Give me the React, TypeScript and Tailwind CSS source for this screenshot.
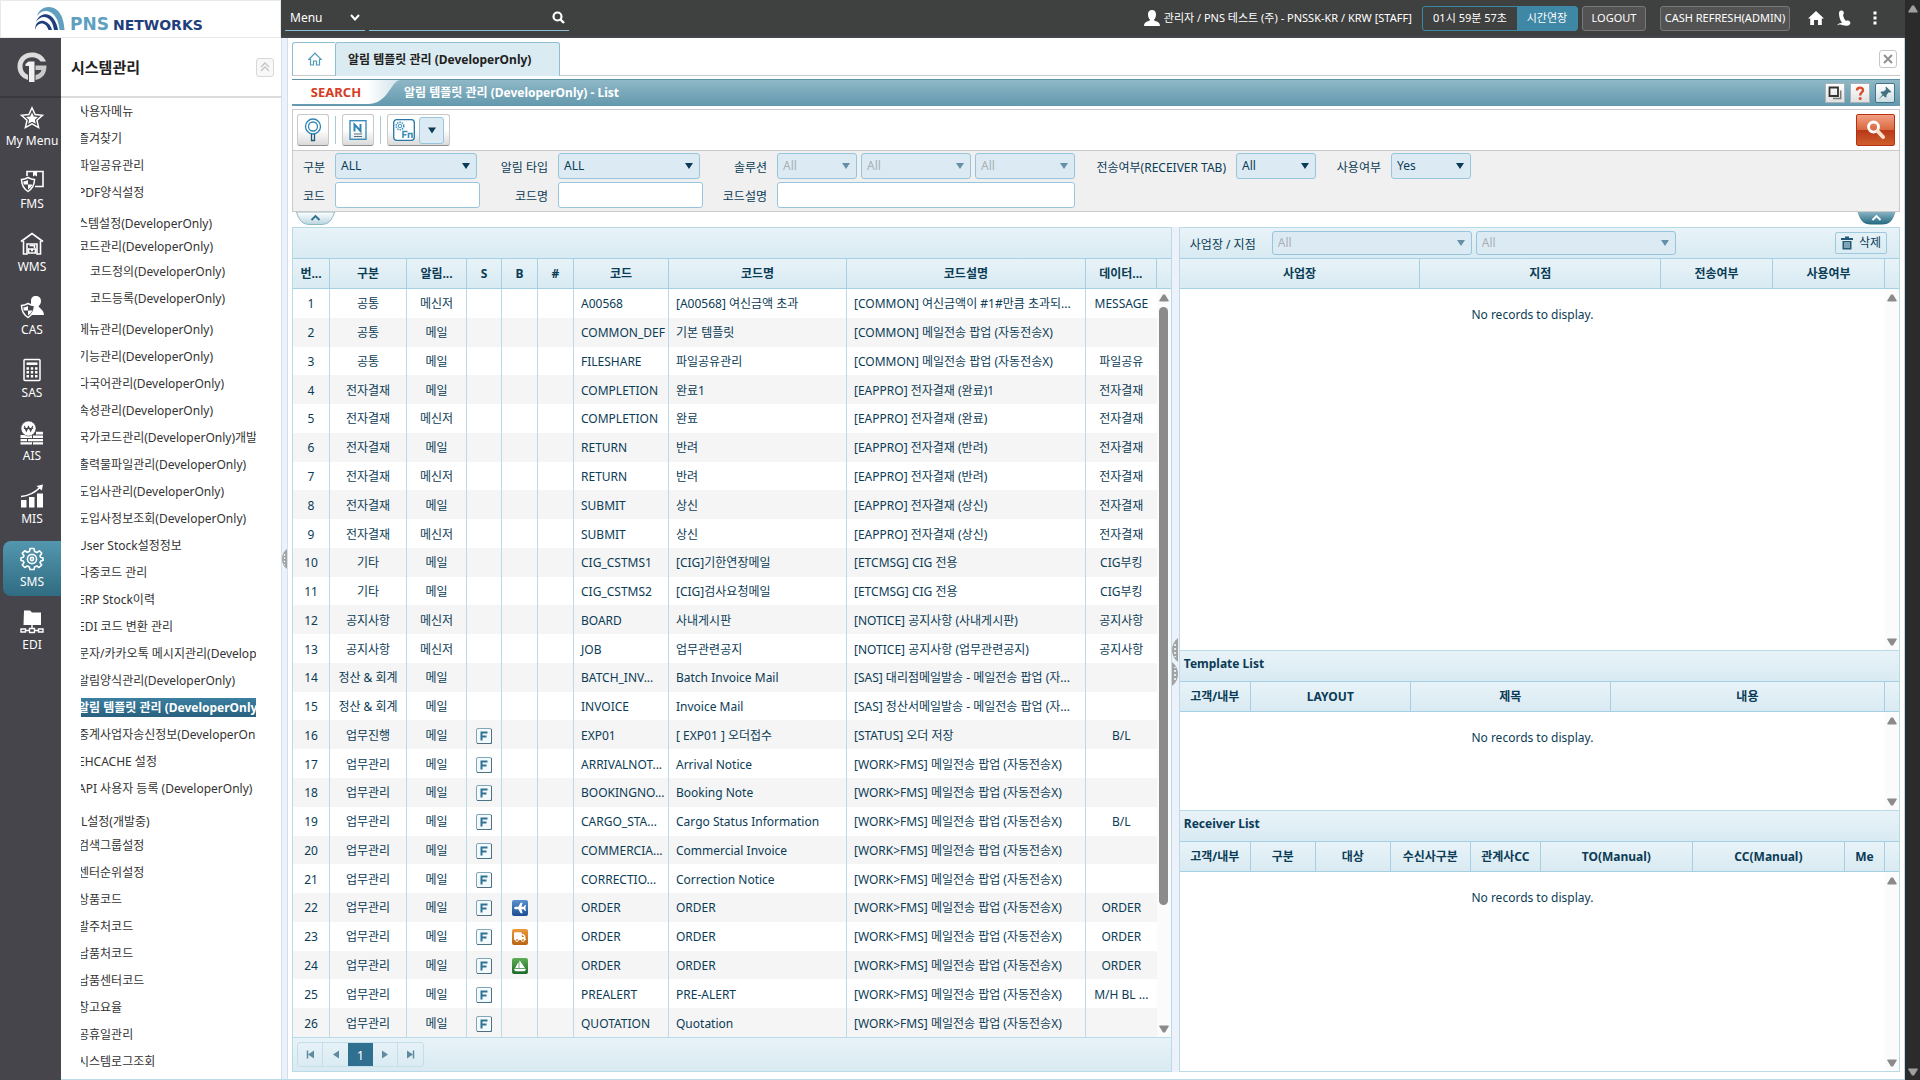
import type { ReactNode } from 'react';
import { FaPlane, FaSailboat, FaTruck } from 'react-icons/fa6';

type Leaf = { label: string; kind?: 'group' | 'top' | 'child' | 'active' | 'bare' };

const tree: Leaf[] = [
  { label: '사용자메뉴' },
  { label: '즐겨찾기' },
  { label: '파일공유관리' },
  { label: 'PDF양식설정' },
  { label: '시스템설정(DeveloperOnly)', kind: 'top' },
  { label: '코드관리(DeveloperOnly)', kind: 'group' },
  { label: '코드정의(DeveloperOnly)', kind: 'child' },
  { label: '코드등록(DeveloperOnly)', kind: 'child' },
  { label: '메뉴관리(DeveloperOnly)' },
  { label: '기능관리(DeveloperOnly)' },
  { label: '다국어관리(DeveloperOnly)' },
  { label: '속성관리(DeveloperOnly)' },
  { label: '국가코드관리(DeveloperOnly)개발' },
  { label: '출력물파일관리(DeveloperOnly)' },
  { label: '도입사관리(DeveloperOnly)' },
  { label: '도입사정보조회(DeveloperOnly)' },
  { label: 'User Stock설정정보' },
  { label: '다중코드 관리' },
  { label: 'ERP Stock이력' },
  { label: 'EDI 코드 변환 관리' },
  { label: '문자/카카오톡 메시지관리(Develop' },
  { label: '알림양식관리(DeveloperOnly)' },
  { label: '알림 템플릿 관리 (DeveloperOnly)', kind: 'active' },
  { label: '중계사업자송신정보(DeveloperOn' },
  { label: 'EHCACHE 설정' },
  { label: 'API 사용자 등록 (DeveloperOnly)' },
  { label: 'L설정(개발중)', kind: 'bare' },
  { label: '검색그룹설정' },
  { label: '센터순위설정' },
  { label: '상품코드' },
  { label: '발주처코드' },
  { label: '납품처코드' },
  { label: '납품센터코드' },
  { label: '창고요율' },
  { label: '공휴일관리' },
  { label: '시스템로그조회' },
];

const MS = '[WORK>FMS] 메일전송 팝업 (자동전송X)';
type Row = [string, string, string, string, string, string, string?, string?];
const rows: Row[] = [
  ['공통', '메신저', 'A00568', '[A00568] 여신금액 초과', '[COMMON] 여신금액이 #1#만큼 초과되...', 'MESSAGE'],
  ['공통', '메일', 'COMMON_DEF', '기본 템플릿', '[COMMON] 메일전송 팝업 (자동전송X)', ''],
  ['공통', '메일', 'FILESHARE', '파일공유관리', '[COMMON] 메일전송 팝업 (자동전송X)', '파일공유'],
  ['전자결재', '메일', 'COMPLETION', '완료1', '[EAPPRO] 전자결재 (완료)1', '전자결재'],
  ['전자결재', '메신저', 'COMPLETION', '완료', '[EAPPRO] 전자결재 (완료)', '전자결재'],
  ['전자결재', '메일', 'RETURN', '반려', '[EAPPRO] 전자결재 (반려)', '전자결재'],
  ['전자결재', '메신저', 'RETURN', '반려', '[EAPPRO] 전자결재 (반려)', '전자결재'],
  ['전자결재', '메일', 'SUBMIT', '상신', '[EAPPRO] 전자결재 (상신)', '전자결재'],
  ['전자결재', '메신저', 'SUBMIT', '상신', '[EAPPRO] 전자결재 (상신)', '전자결재'],
  ['기타', '메일', 'CIG_CSTMS1', '[CIG]기한연장메일', '[ETCMSG] CIG 전용', 'CIG부킹'],
  ['기타', '메일', 'CIG_CSTMS2', '[CIG]검사요청메일', '[ETCMSG] CIG 전용', 'CIG부킹'],
  ['공지사항', '메신저', 'BOARD', '사내게시판', '[NOTICE] 공지사항 (사내게시판)', '공지사항'],
  ['공지사항', '메신저', 'JOB', '업무관련공지', '[NOTICE] 공지사항 (업무관련공지)', '공지사항'],
  ['정산 & 회계', '메일', 'BATCH_INV...', 'Batch Invoice Mail', '[SAS] 대리점메일발송 - 메일전송 팝업 (자...', ''],
  ['정산 & 회계', '메일', 'INVOICE', 'Invoice Mail', '[SAS] 정산서메일발송 - 메일전송 팝업 (자...', ''],
  ['업무진행', '메일', 'EXP01', '[ EXP01 ] 오더접수', '[STATUS] 오더 저장', 'B/L', 'F'],
  ['업무관리', '메일', 'ARRIVALNOT...', 'Arrival Notice', MS, '', 'F'],
  ['업무관리', '메일', 'BOOKINGNO...', 'Booking Note', MS, '', 'F'],
  ['업무관리', '메일', 'CARGO_STA...', 'Cargo Status Information', MS, 'B/L', 'F'],
  ['업무관리', '메일', 'COMMERCIA...', 'Commercial Invoice', MS, '', 'F'],
  ['업무관리', '메일', 'CORRECTIO...', 'Correction Notice', MS, '', 'F'],
  ['업무관리', '메일', 'ORDER', 'ORDER', MS, 'ORDER', 'F', 'air'],
  ['업무관리', '메일', 'ORDER', 'ORDER', MS, 'ORDER', 'F', 'truck'],
  ['업무관리', '메일', 'ORDER', 'ORDER', MS, 'ORDER', 'F', 'sea'],
  ['업무관리', '메일', 'PREALERT', 'PRE-ALERT', MS, 'M/H BL ...', 'F'],
  ['업무관리', '메일', 'QUOTATION', 'Quotation', MS, '', 'F'],
];

const HEAD = 'bg-linear-to-b from-[#e8f3f8] to-[#d9eaf2]';

/* ---------- rail icons ---------- */
const shield = (
  <>
    <path d="M8 8.500 C10.500 10 13 10.500 14.500 10.500 C14.500 16 12.500 19.500 8 22.500 C3.500 19.500 1.500 16 1.500 10.500 C3 10.500 5.500 10 8 8.500 Z" fill="#46454b" stroke="#fff" strokeWidth="1.500" />
    <path d="M8 11 V15.500 H3.800 C3.500 14.500 3.400 13.500 3.400 12.300 C5 12.200 6.700 11.800 8 11 Z M8 15.500 H12.300 C11.600 17.500 10.200 19 8 20.500 Z" fill="#fff" />
  </>
);
const railIcons: Record<string, ReactNode> = {
  'My Menu': (
    <g fill="none" stroke="#fff">
      <path d="M12 1.800 L15.100 8.500 L22.500 9.300 L17 14.300 L18.600 21.600 L12 17.900 L5.400 21.600 L7 14.300 L1.500 9.300 L8.900 8.500 Z" strokeWidth="1.500" />
      <path d="M12 6.500 L13.800 10.500 L18 11 L14.900 13.700 L15.800 17.800 L12 15.700 L8.200 17.800 L9.100 13.700 L6 11 L10.200 10.500 Z" fill="#fff" stroke="none" />
    </g>
  ),
  FMS: (
    <>
      <path d="M7 7 V2.500 H23 V17.500 H15" fill="none" stroke="#fff" strokeWidth="1.600" />
      <path d="M13 2.500 V7.500 L15 6.300 L17 7.500 V2.500 Z" fill="#fff" />
      {shield}
    </>
  ),
  WMS: (
    <g fill="none" stroke="#fff" strokeWidth="1.600">
      <path d="M1 9.500 L12 1.500 L23 9.500 M3.500 9 V22 H7 V12 H17 V22 H20.500 V9" />
      <path d="M9.500 13.500 H14.500 V16 M8.500 17 H15.500 V21 H8.500 Z M11 18.500 H13" />
    </g>
  ),
  CAS: (
    <>
      <path d="M16 1 C19.500 1 21 3.500 21 6 C21 8.500 19.800 10.300 18.500 11 C19.500 14 23.500 14 24 20 H11 V6 C11 3 12.500 1 16 1 Z" fill="#fff" />
      {shield}
    </>
  ),
  SAS: (
    <g fill="none" stroke="#fff" strokeWidth="1.500">
      <rect x="4" y="1.500" width="16" height="21" rx="1" />
      <path d="M6.500 5.700 H17.500" strokeWidth="2.500" />
      <path d="M6.500 10.500 H9 M10.800 10.500 H13.200 M15 10.500 H17.500 M6.500 14.300 H9 M10.800 14.300 H13.200 M15 14.300 H17.500 M6.500 18.200 H9 M10.800 18.200 H13.200 M15 18.200 H17.500" strokeWidth="2.600" />
    </g>
  ),
  AIS: (
    <>
      <path d="M0.500 14 H12 V17 H0.500 Z M0.500 18 H7 V20.300 H0.500 Z M8 18 H23 V20.300 H8 Z M0.500 21.200 H12 V23.500 H0.500 Z M13 21.200 H23 V23.500 H13 Z M13 14.500 H23 V17 H13 Z M16 10.800 H23 V13.400 H16 Z" fill="#fff" />
      <circle cx="8.500" cy="7.500" r="7.500" fill="#fff" stroke="#46454b" strokeWidth="0.600" />
      <path d="M4.300 5 L6.300 10 L8.500 5.500 L10.700 10 L12.700 5 M3.800 7.500 H13.200" fill="none" stroke="#46454b" strokeWidth="1.200" />
    </>
  ),
  MIS: (
    <>
      <path d="M1 16 H6.500 V23.500 H1 Z M9 13 H14.500 V23.500 H9 Z M17 9.500 H23 V23.500 H17 Z" fill="#fff" />
      <path d="M1 12.500 C9 12 15 8.500 20.500 3" fill="none" stroke="#fff" strokeWidth="1.600" />
      <path d="M16.500 2 L23 0.500 L21.800 6.500 Z" fill="#fff" />
    </>
  ),
  SMS: (
    <g fill="none" stroke="#fff" strokeWidth="1.600">
      <path d="M10 1.500 H14 L14.600 4.500 L17 5.500 L19.400 3.800 L21.700 6.300 L20 9 L20.700 10.500 L23 11 V13.500 L20.700 14 L20 15.500 L21.700 18 L19 20.500 L16.800 19 L14.600 20 L14 22.500 H10 L9.400 20 L7.200 19 L4.800 20.500 L2.300 18 L4 15.500 L3.300 14 L1 13.500 V10.700 L3.300 10.300 L4 8.700 L2.300 6.200 L4.800 3.800 L7.200 5.300 L9.400 4.500 Z" strokeLinejoin="round" />
      <circle cx="12" cy="12" r="4.600" />
      <circle cx="12" cy="12" r="1.600" />
    </g>
  ),
  EDI: (
    <>
      <path d="M4 0.500 H10 L12 2.500 H21 V15 H3.500 Z" fill="#fff" />
      <path d="M12 15 V20 M4 20.500 H20" stroke="#fff" strokeWidth="1.400" />
      <path d="M1 19 H5.500 V22 H1 Z M9.500 18.500 H14.500 V22.500 H9.500 Z M18.500 19 H23 V22 H18.500 Z" fill="#46454b" stroke="#fff" strokeWidth="1.400" />
    </>
  ),
};

/* ---------- small pieces ---------- */
function Caret({ className }: { className: string }) {
  return (
    <svg viewBox="0 0 9 7" className={className} aria-hidden="true">
      <path d="M0 0 H9 L4.500 7 Z" fill="currentColor" />
    </svg>
  );
}

function Pick({ id, label, value, size, h = 'h-[26px]', disabled }: { id: string; label: string; value: string; size: string; h?: string; disabled?: boolean }) {
  return (
    <div className={`relative ${size}`}>
      <select
        id={id}
        aria-label={label}
        disabled={disabled}
        className={`w-full ${h} appearance-none rounded-[3px] border border-[#97c6dc] bg-[#dcebf3] pl-[5px] text-xs leading-none ${disabled ? 'text-[#a9afb3]' : 'text-[#0b3c56]'}`}
      >
        <option>{value}</option>
      </select>
      <Caret className={`pointer-events-none absolute right-[7px] top-1/2 h-[7px] w-[8px] -translate-y-1/2 ${disabled ? 'text-[#6590a5]' : 'text-[#0b3c56]'}`} />
    </div>
  );
}

function ScrollColumn({ thumb }: { thumb?: boolean }) {
  return (
    <div className="flex w-[14px] shrink-0 flex-col">
      <div className={`h-[31px] border-y border-[#a5cfe2] ${HEAD}`} />
      <div className="flex flex-1 flex-col items-center bg-[#fbfbfb] py-1">
        <svg viewBox="0 0 10 8" className="mt-px h-[8px] w-[10px]"><path d="M4 0.500 H6 L9.700 6.500 Q10 7.500 9 7.500 H1 Q0 7.500 0.300 6.500 Z" fill="#8b8b8b" /></svg>
        <div className="mt-[5px] flex w-full flex-1 justify-center">
          {thumb && <div className="h-5/6 w-[9px] rounded-full bg-[#8b8b8b]" />}
        </div>
        <svg viewBox="0 0 10 8" className="h-[8px] w-[10px] rotate-180"><path d="M4 0.500 H6 L9.700 6.500 Q10 7.500 9 7.500 H1 Q0 7.500 0.300 6.500 Z" fill="#8b8b8b" /></svg>
      </div>
    </div>
  );
}

function Th({ children, w }: { children: ReactNode; w: string }) {
  return (
    <th scope="col" className={`${w} h-[31px] truncate border-y border-r border-[#a5cfe2] px-1 text-center font-bold ${HEAD}`}>
      {children}
    </th>
  );
}

function EmptyGrid({ cols, label }: { cols: [string, string][]; label: string }) {
  return (
    <div className="flex min-h-0 flex-1">
      <div className="min-w-0 flex-1">
        <table aria-label={label} className="h-full w-full table-fixed border-separate border-spacing-0">
          <thead>
            <tr className="h-[31px]">
              {cols.map(([name, w]) => <Th key={name} w={w}>{name}</Th>)}
            </tr>
          </thead>
          <tbody>
            <tr>
              <td colSpan={cols.length} className="pt-[18px] text-center align-top">No records to display.</td>
            </tr>
          </tbody>
        </table>
      </div>
      <ScrollColumn />
    </div>
  );
}

function FlagF() {
  return (
    <svg viewBox="0 0 16 16" className="mx-auto block size-4" role="img" aria-label="F">
      <rect x="0.500" y="0.500" width="15" height="15" rx="1.500" fill="#f4fafc" stroke="#7fa5b8" />
      <path d="M1 15.500 H15.500 V1" fill="none" stroke="#4d7286" />
      <path d="M5.500 12.500 V4.500 H11.500 M5.500 8.500 H10.500" fill="none" stroke="#2f7292" strokeWidth="2" />
    </svg>
  );
}

function Mode({ kind }: { kind: string }) {
  if (kind === 'air')
    return <span className="mx-auto flex size-4 items-center justify-center rounded-[2px] bg-linear-to-b from-[#5c93d0] to-[#1d4c94] text-white"><FaPlane className="size-3 rotate-180" /></span>;
  if (kind === 'truck')
    return <span className="mx-auto flex size-4 items-center justify-center rounded-[2px] bg-linear-to-b from-[#f09a3c] to-[#b86413] text-white"><FaTruck className="size-3" /></span>;
  return <span className="mx-auto flex size-4 items-center justify-center rounded-[2px] bg-linear-to-b from-[#5fae55] to-[#1c6b2a] text-white"><FaSailboat className="size-3" /></span>;
}

function ToolButton({ label, children }: { label: string; children: ReactNode }) {
  return (
    <button type="button" aria-label={label} className="flex h-[32px] w-[32px] items-center justify-center rounded-[3px] border border-[#c9c9c9] border-b-[#8f8f8f] bg-linear-to-b from-white from-50% to-[#dadada]">
      {children}
    </button>
  );
}

function Handle({ flip }: { flip?: boolean }) {
  return (
    <svg viewBox="0 0 6 24" className={`h-[24px] w-[6px] ${flip ? 'rotate-180' : ''}`} aria-hidden="true">
      <path d="M6 0 C2 3 0 7 0 12 C0 17 2 21 6 24 Z" fill="#a3a3a3" />
      <path d="M3 6 V19" stroke="#fff" strokeWidth="1.500" strokeDasharray="2 2" />
    </svg>
  );
}

function TopBar() {
  return (
    <header className="flex h-[38px] shrink-0">
      <div className="flex w-[281px] items-center border border-[#e9e9e9] bg-white pl-[34px]">
        <svg viewBox="0 0 30 24" className="h-[24px] w-[30px]" aria-hidden="true">
          <path d="M2 9 C5 -1 16 -2 22 3 C27 7 29 15 29.500 23 H24.500 C24 13 19 5 12 4 C8 3.500 5 5 2 9 Z" fill="#5f9fc0" />
          <path d="M1 15 C5 5 14 6 18 11 C21 15 22.500 19 23 23 H19 C18 15 14 10 9 10 C5.500 10 3 12 1 15 Z" fill="#1f3f7c" />
          <path d="M0 23 C0 16 4 12.500 9 14 C13.500 15.500 16 19 17 23 H13.500 C12 18 9 16 6 16.500 C3 17 1 19 0 23 Z" fill="#1f3f7c" />
        </svg>
        <span className="mt-[10px] flex items-baseline gap-1 pl-[5px] font-['DejaVu_Sans',sans-serif] font-bold leading-none">
          <span className="text-[17px] text-[#5f9fc0]">PNS</span>
          <span className="text-[14px] text-[#1f3f7c]">NETWORKS</span>
        </span>
      </div>
      <div className="flex flex-1 items-center border-b-2 border-[#46454b] bg-[#3f4040] pl-1 pr-[28px] text-white">
        <button type="button" className="mb-[5px] flex h-[31px] w-[80px] items-center justify-between border-b border-[#8cc0d8] px-[5px] pt-[5px] text-xs">
          Menu
          <svg viewBox="0 0 10 7" className="h-[7px] w-[10px]"><path d="M1 1 L5 5.500 L9 1" fill="none" stroke="#fff" strokeWidth="2" /></svg>
        </button>
        <div className="mb-[5px] ml-1 flex h-[31px] w-[200px] items-center border-b border-[#8cc0d8] pr-[4px] pt-[5px]">
          <input aria-label="메뉴 검색" className="min-w-0 flex-1 bg-transparent text-xs outline-none" />
          <button type="button" aria-label="검색">
            <svg viewBox="0 0 13 13" className="size-[13px]"><circle cx="5.500" cy="5.500" r="4" fill="none" stroke="#fff" strokeWidth="2.200" /><path d="M8.500 8.500 L12 12" stroke="#fff" strokeWidth="2.400" /></svg>
          </button>
        </div>
        <div className="ml-auto flex items-center text-[11px]">
          <svg viewBox="0 0 16 16" className="size-4" aria-hidden="true"><path d="M8 0 C11 0 12 2.200 12 4.500 C12 7 11 9 9.800 9.800 C10 11.500 16 11 16 16 H0 C0 11 6 11.500 6.200 9.800 C5 9 4 7 4 4.500 C4 2.200 5 0 8 0 Z" fill="#fff" /></svg>
          <span className="pl-[4px] pr-[10px]">관리자 / PNS 테스트 (주) - PNSSK-KR / KRW [STAFF]</span>
          <span className="flex h-[25px] items-center rounded-[3px] border border-[#3e87a5]">
            <span className="w-[94px] text-center">01시 59분 57초</span>
            <button type="button" className="h-full w-[60px] bg-[#3e87a5]">시간연장</button>
          </span>
          <button type="button" className="ml-1 h-[25px] w-[64px] rounded-[3px] border border-[#787878] bg-[#535353]">LOGOUT</button>
          <button type="button" className="ml-[14px] h-[25px] w-[130px] whitespace-nowrap rounded-[3px] border border-[#787878] bg-[#535353] text-center">CASH REFRESH(ADMIN)</button>
          <a href="#home" aria-label="홈" className="ml-[18px]">
            <svg viewBox="0 0 16 14" className="h-[14px] w-[16px]"><path d="M8 0 L16 7.500 H13.800 V14 H10 V9 H6 V14 H2.200 V7.500 H0 Z" fill="#fff" /></svg>
          </a>
          <a href="#phone" aria-label="전화" className="ml-[13px]">
            <svg viewBox="0 0 14 16" className="h-[16px] w-[14px]"><path d="M2.200 2 C3 0 6 0 6.600 2 C7.200 3.500 6.500 4.500 6 5 C6.500 7.500 7.500 9.500 9 11 C10 10.300 12 10.500 13 11.800 C14 13.500 12.800 15 11 15.600 C8 16.300 5 14.800 3 14.600 C1.800 14.500 1 15 0 15.600 C0.800 13.600 2.500 12.800 5 13 C2.800 9.800 1.500 5 2.200 2 Z" fill="#fff" /></svg>
          </a>
          <button type="button" aria-label="더보기" className="ml-[22px]">
            <svg viewBox="0 0 4 14" className="h-[14px] w-[4px]"><path d="M0.500 0.500 H3.500 V3.500 H0.500 Z M0.500 5.500 H3.500 V8.500 H0.500 Z M0.500 10.500 H3.500 V13.500 H0.500 Z" fill="#fff" /></svg>
          </button>
        </div>
      </div>
    </header>
  );
}

function Rail() {
  return (
    <nav aria-label="모듈" className="flex w-[61px] shrink-0 flex-col bg-[#46454b] text-xs text-white">
      <div className="flex h-[60px] items-center justify-center border-b-2 border-[#3a393e] pl-[2px]">
        <svg viewBox="0 0 30 30" className="size-[30px]" role="img" aria-label="G1">
          <path d="M29 9.500 C26 3 21 0.500 15 0.500 C6.500 0.500 0.500 6.500 0.500 14.500 C0.500 21 4.500 26 11 28 V23 C7.500 21.500 5.500 18.500 5.500 14.500 C5.500 9 9.500 5.200 15 5.200 C18.500 5.200 21.300 6.500 23.500 9.500 Z" fill="#dcdcdc" />
          <path d="M18.500 13.500 H29.500 C29.500 21.500 26 26.500 18.500 28 V23 C22 22 24 20.500 24.500 18 H18.500 Z" fill="#c9c9c9" />
          <path d="M8.500 12 L11.500 9.500 H17.500 V30 H12 V14 H8.500 Z" fill="#f1f1f1" />
        </svg>
      </div>
      <div className="flex flex-col pt-[2px]">
        {Object.keys(railIcons).map((name) => (
          <a
            key={name}
            href={`#${name}`}
            className={`mb-2 flex h-[55px] flex-col items-center justify-center gap-[3px] ${name === 'SMS' ? 'ml-[3px] rounded-l-lg bg-linear-to-b from-[#5397ae] to-[#306c82]' : 'pl-[3px]'}`}
          >
            <svg viewBox="0 0 24 24" className="size-[24px]" aria-hidden="true">{railIcons[name]}</svg>
            <span className="leading-4">{name}</span>
          </a>
        ))}
      </div>
    </nav>
  );
}

function Sidebar() {
  return (
    <aside className="flex w-[220px] shrink-0 flex-col bg-white text-xs text-[#333]">
      <div className="flex h-[60px] shrink-0 items-center justify-between border-b-2 border-[#dcdcdc] pl-[10px] pr-[7px]">
        <h1 className="text-[15px] font-bold text-[#222]">시스템관리</h1>
        <button type="button" aria-label="접기" className="flex h-[19px] w-[18px] items-center justify-center rounded-[3px] border border-[#d8d8d8] bg-[#f8f8f8]">
          <svg viewBox="0 0 10 10" className="size-[10px]"><path d="M1 5 L5 1 L9 5 M1 9 L5 5 L9 9" fill="none" stroke="#c4c4c4" strokeWidth="1.300" /></svg>
        </button>
      </div>
      <ul className="ml-[20px] w-[175px] overflow-hidden whitespace-nowrap">
        {tree.map(({ label, kind }) => {
          const box =
            kind === 'top' ? 'mt-[6px] h-[22px]'
            : kind === 'bare' ? 'mt-[8px] h-[22px]'
            : kind === 'group' ? 'h-[24px]'
            : label === '메뉴관리(DeveloperOnly)' ? 'mt-[4px] h-[27px]'
            : 'h-[27px]';
          const text =
            kind === 'top' ? '-ml-[15px]'
            : kind === 'child' ? 'ml-[9px]'
            : kind === 'bare' ? ''
            : kind === 'active' ? '-ml-[3px] bg-linear-to-b from-[#3b7fa0] to-[#29617f] text-white font-bold'
            : '-ml-[3px]';
          return (
            <li key={label} className={`flex items-center ${box}`}>
              <a href="#item" className={`block leading-[19px] ${text}`}>{label}</a>
            </li>
          );
        })}
      </ul>
    </aside>
  );
}

function SearchPanel() {
  const input = 'h-[26px] w-full rounded-[3px] border border-[#97c6dc] bg-white px-1 outline-none';
  const label = 'pr-[10px] pt-[3px] text-right';
  return (
    <section className="mt-[3px] shrink-0 border border-[#cacaca]">
      <div className="flex h-[40px] items-center justify-between bg-white px-1">
        <div className="flex items-center gap-[6px]">
          <ToolButton label="찾기">
            <svg viewBox="0 0 20 24" className="h-[24px] w-[20px]"><g fill="none" stroke="#2f86b5"><circle cx="10" cy="8.500" r="7.500" strokeWidth="1.300" /><circle cx="10" cy="8.500" r="4.500" strokeWidth="1.300" /><path d="M8.500 16 V22.500 H11.500 V16" stroke="#1f5876" strokeWidth="1.300" /></g></svg>
          </ToolButton>
          <div className="h-[28px] w-px bg-[#a7c9d8]" />
          <ToolButton label="신규">
            <svg viewBox="0 0 18 20" className="h-[20px] w-[18px]"><g fill="none" stroke="#2f86b5"><rect x="1" y="0.700" width="16" height="18.600" strokeWidth="1.300" /><path d="M5.500 11.500 V4.500 L11.500 11 V4" strokeWidth="2" /><path d="M5 14 H13 M5 16.500 H13" stroke="#4d7286" /></g></svg>
          </ToolButton>
          <div className="h-[28px] w-px bg-[#a7c9d8]" />
          <div className="flex h-[32px] w-[63px] items-center gap-[4px] rounded-[3px] border border-[#c9c9c9] border-b-[#8f8f8f] bg-linear-to-b from-white from-50% to-[#dadada] pl-[5px]">
            <button type="button" aria-label="기능" className="flex size-[22px] items-center justify-center">
              <svg viewBox="0 0 22 22" className="size-[22px]"><rect x="0.700" y="0.700" width="20.600" height="20.600" rx="3" fill="#fff" stroke="#2477a3" strokeWidth="1.300" /><circle cx="7" cy="7" r="3.800" fill="none" stroke="#3d95c4" strokeWidth="1.500" strokeDasharray="1.500 0.900" /><circle cx="7" cy="7" r="1.800" fill="none" stroke="#3d95c4" /><path d="M10 19 V12.500 H14.500 M10 15.700 H13.500 M15.500 19 V14.500 H19 V19" fill="none" stroke="#3a8dba" strokeWidth="1.600" /></svg>
            </button>
            <button type="button" aria-label="기능 목록" className="flex h-[27px] w-[25px] items-center justify-center rounded-[3px] border border-[#97c6dc] bg-[#dcebf3] text-[#0b3c56]"><Caret className="h-[7px] w-[8px]" /></button>
          </div>
        </div>
        <button type="button" aria-label="조회" className="flex h-[32px] w-[39px] items-center justify-center rounded-[2px] border border-[#b92f12] bg-[linear-gradient(#f2a083,#d9683f_50%,#b7371a_50%,#cf5f2c)]">
          <svg viewBox="0 0 20 20" className="size-5"><circle cx="7.500" cy="7" r="5" fill="none" stroke="#fff" strokeWidth="2.800" /><path d="M11.500 11 L17 17" stroke="#ffe0cb" strokeWidth="4" strokeLinecap="round" /></svg>
        </button>
      </div>
      <div className="grid grid-cols-[42px_145px_78px_145px_74px_298px_161px_80px_75px_80px] items-center gap-y-[3px] border-t border-[#cacaca] bg-[#f0f0f0] pb-[3px] pt-[2px]">
        <label htmlFor="gubun" className={label}>구분</label>
        <Pick id="gubun" label="구분" value="ALL" size="w-[142px]" />
        <label htmlFor="type" className={label}>알림 타입</label>
        <Pick id="type" label="알림 타입" value="ALL" size="w-[142px]" />
        <label htmlFor="sol1" className={label}>솔루션</label>
        <div className="flex gap-1">
          <Pick id="sol1" label="솔루션 1" value="All" size="w-[80px]" disabled />
          <Pick id="sol2" label="솔루션 2" value="All" size="w-[110px]" disabled />
          <Pick id="sol3" label="솔루션 3" value="All" size="w-[100px]" disabled />
        </div>
        <label htmlFor="send" className={label}>전송여부(RECEIVER TAB)</label>
        <Pick id="send" label="전송여부" value="All" size="w-[80px]" />
        <label htmlFor="use" className={label}>사용여부</label>
        <Pick id="use" label="사용여부" value="Yes" size="w-[80px]" />
        <label htmlFor="code" className={label}>코드</label>
        <input id="code" className={input} />
        <label htmlFor="codename" className={label}>코드명</label>
        <input id="codename" className={input} />
        <label htmlFor="codedesc" className={label}>코드설명</label>
        <input id="codedesc" className={input} />
      </div>
    </section>
  );
}

function TemplateGrid() {
  const cell = 'truncate border-r border-[#b9dbe8] pt-[2px]';
  const mid = `${cell} px-1 text-center`;
  const left = `${cell} pl-[7px] pr-px text-left`;
  return (
    <section className="flex min-w-0 flex-[880_1_0%] flex-col border-x border-b border-[#b9dbe8]">
      <div className={`h-[31px] shrink-0 border-t border-[#b9dbe8] ${HEAD}`} />
      <div className="flex min-h-0 flex-1">
        <div className="min-w-0 flex-1">
          <table aria-label="알림 템플릿" className="h-full w-full table-fixed border-separate border-spacing-0">
            <thead>
              <tr className="h-[31px]">
                <Th w="w-[37px]">번...</Th>
                <Th w="w-[77px]">구분</Th>
                <Th w="w-[60px]">알림...</Th>
                <Th w="w-[35px]">S</Th>
                <Th w="w-[36px]">B</Th>
                <Th w="w-[36px]">#</Th>
                <Th w="w-[95px]">코드</Th>
                <Th w="w-[178px]">코드명</Th>
                <Th w="">코드설명</Th>
                <Th w="w-[71px]">데이터...</Th>
              </tr>
            </thead>
            <tbody>
              {rows.map((r, i) => (
                <tr key={i} className="odd:bg-white even:bg-[#f5f5f5]">
                  <td className={mid}>{i + 1}</td>
                  <td className={mid}>{r[0]}</td>
                  <td className={mid}>{r[1]}</td>
                  <td className={mid}>{r[6] && <FlagF />}</td>
                  <td className={mid}>{r[7] && <Mode kind={r[7]} />}</td>
                  <td className={mid} />
                  <td className={left}>{r[2]}</td>
                  <td className={left}>{r[3]}</td>
                  <td className={left}>{r[4]}</td>
                  <td className="truncate px-1 pt-[2px] text-center">{r[5]}</td>
                </tr>
              ))}
            </tbody>
          </table>
        </div>
        <ScrollColumn thumb />
      </div>
      <div className={`flex h-[34px] shrink-0 items-center border-t border-[#b9dbe8] pl-1 ${HEAD}`}>
        <div className="flex h-[25px] items-stretch rounded-[3px] border border-[#c5dfea] text-[#5f8ba0]">
          {['first', 'prev', 'page', 'next', 'last'].map((k) =>
            k === 'page' ? (
              <button key={k} type="button" aria-current="page" className="w-[25px] bg-[#2f6f8f] text-[13px] text-white">1</button>
            ) : (
              <button key={k} type="button" aria-label={k} className={`flex w-[25px] items-center justify-center border-[#c5dfea] ${k === 'first' || k === 'next' ? 'border-r' : ''}`}>
                <svg viewBox="0 0 9 9" className={`size-[9px] ${k === 'next' || k === 'last' ? 'rotate-180' : ''}`}>
                  <path d="M8 0.500 V8.500 L2 4.500 Z" fill="currentColor" />
                  {(k === 'first' || k === 'last') && <path d="M1.500 0.500 V8.500" stroke="currentColor" strokeWidth="1.500" />}
                </svg>
              </button>
            ),
          )}
        </div>
      </div>
    </section>
  );
}

function RightPanels() {
  const title = `flex h-[31px] shrink-0 items-center border-t border-[#b9dbe8] ${HEAD}`;
  return (
    <section className="flex min-w-0 flex-[721_1_0%] flex-col border-x border-b border-[#b9dbe8]">
      <div className="flex min-h-0 flex-[423_1_0%] flex-col">
        <div className={`${title} pl-[10px] pr-[12px]`}>
          <label htmlFor="site" className="w-[82px] pt-[3px]">사업장 / 지점</label>
          <Pick id="site" label="사업장" value="All" size="w-[200px]" h="h-[24px]" disabled />
          <div className="ml-1"><Pick id="branch" label="지점" value="All" size="w-[200px]" h="h-[24px]" disabled /></div>
          <button type="button" className="ml-auto flex h-[22px] w-[52px] items-center justify-center gap-[6px] rounded-[2px] border border-[#9cc9dd]">
            <svg viewBox="0 0 12 14" className="h-[14px] w-[12px]"><path d="M4 0.500 H8 V2 H12 V4 H0 V2 H4 Z M1.500 5 H10.500 V13.500 H1.500 Z" fill="#225a78" /><path d="M4 6 V12 M6 6 V12 M8 6 V12" stroke="#dcebf3" /></svg>
            삭제
          </button>
        </div>
        <EmptyGrid label="사업장" cols={[['사업장', ''], ['지점', ''], ['전송여부', 'w-[112px]'], ['사용여부', 'w-[112px]']]} />
      </div>
      <div className="flex min-h-0 flex-[160_1_0%] flex-col">
        <div className={`${title} pb-1 pl-[4px]`}><h2 className="font-bold">Template List</h2></div>
        <EmptyGrid label="Template List" cols={[['고객/내부', 'w-[71px]'], ['LAYOUT', 'w-[160px]'], ['제목', 'w-[200px]'], ['내용', '']]} />
      </div>
      <div className="flex min-h-0 flex-[261_1_0%] flex-col">
        <div className={`${title} pb-1 pl-[4px]`}><h2 className="font-bold">Receiver List</h2></div>
        <EmptyGrid
          label="Receiver List"
          cols={[['고객/내부', 'w-[71px]'], ['구분', 'w-[65px]'], ['대상', 'w-[75px]'], ['수신사구분', 'w-[80px]'], ['관계사CC', 'w-[70px]'], ['TO(Manual)', ''], ['CC(Manual)', ''], ['Me', 'w-[40px]']]}
        />
      </div>
    </section>
  );
}

export default function App() {
  return (
    <div className="flex h-screen w-full overflow-hidden bg-white font-['Noto_Sans','Noto_Sans_CJK_KR',sans-serif] text-xs leading-4 text-[#0b3c56]">
      <div className="flex min-w-0 flex-1 flex-col">
        <TopBar />
        <div className="flex min-h-0 flex-1">
          <Rail />
          <div className="flex min-w-0 flex-1 border-b border-[#b9dbe8]">
            <Sidebar />
            <div className="flex w-[7px] shrink-0 items-center border-x border-[#cfe0ef] bg-[#edf2fa]">
              <Handle />
            </div>
            <main className="flex min-w-0 flex-1 flex-col border-r border-[#b9dbe8] px-1 pb-[7px] pt-1">
              <div className="flex h-[34px] shrink-0">
                <button type="button" aria-label="홈 탭" className="flex w-[43px] items-center justify-center rounded-tl-[3px] border border-r-0 border-[#8fbfd3] border-b-[#c6c6c6] bg-white pl-[2px]">
                  <svg viewBox="0 0 14 14" className="size-[14px]"><path d="M0.800 7.500 L7 1 L13.200 7.500 H11.500 V13 H8.500 V9 H5.500 V13 H2.500 V7.500 Z" fill="none" stroke="#4f9ab8" strokeWidth="1.200" /></svg>
                </button>
                <button type="button" className="w-[225px] rounded-t-[3px] border border-b-0 border-[#8fbfd3] bg-[#dbebf2] pl-3 text-left font-bold text-[#222]">알림 템플릿 관리 (DeveloperOnly)</button>
                <div className="flex flex-1 items-center justify-end border-b border-[#c6c6c6] pr-[3px]">
                  <button type="button" aria-label="닫기" className="flex h-[18px] w-[18px] items-center justify-center rounded-[3px] border border-[#c6c6c6]">
                    <svg viewBox="0 0 10 10" className="size-[10px]"><path d="M1 1 L9 9 M9 1 L1 9" stroke="#909090" strokeWidth="2" /></svg>
                  </button>
                </div>
              </div>
              <div className="mt-[3px] flex h-[27px] shrink-0 items-center border-t border-[#5c93a8] bg-linear-to-b from-[#8fb8c6] to-[#6398ae] pr-[5px] text-white">
                <div className="relative flex h-full w-[112px] items-center">
                  <svg viewBox="0 0 108 26" preserveAspectRatio="none" className="absolute inset-0 h-full w-[108px]" aria-hidden="true">
                    <defs><linearGradient id="tab" x1="0" x2="1"><stop offset="0.700" stopColor="#fff" /><stop offset="1" stopColor="#cfe2ea" /></linearGradient></defs>
                    <path d="M0 0 H108 C98 2 96 24 76 24 H0 Z" fill="url(#tab)" />
                  </svg>
                  <span className="relative w-[88px] pb-[2px] text-center text-[13px] font-bold text-[#d63c24]">SEARCH</span>
                </div>
                <h2 className="font-bold">알림 템플릿 관리 (DeveloperOnly) - List</h2>
                <div className="ml-auto flex gap-[5px]">
                  <button type="button" aria-label="새 창" className="flex size-[20px] items-center justify-center border border-[#a9b4b8] bg-linear-to-b from-white to-[#e0e0e0]">
                    <svg viewBox="0 0 14 14" className="size-[14px]"><path d="M1.500 1.500 H10 V10 H1.500 Z" fill="none" stroke="#333" strokeWidth="1.800" /><path d="M5 12.500 H12.700 V4.500" fill="none" stroke="#777" strokeWidth="1.500" /></svg>
                  </button>
                  <button type="button" aria-label="도움말" className="flex size-[20px] items-center justify-center border border-[#a9b4b8] bg-linear-to-b from-white to-[#e0e0e0]">
                    <svg viewBox="0 0 10 14" className="h-[14px] w-[10px]"><path d="M2 4.500 C2 0.800 8 0.800 8 4 C8 6.500 5.200 6.500 5.200 9.500" fill="none" stroke="#dc4a2a" strokeWidth="2.400" /><circle cx="5.200" cy="12.400" r="1.500" fill="#dc4a2a" /></svg>
                  </button>
                  <button type="button" aria-label="고정" className="flex size-[20px] items-center justify-center rounded-[2px] border border-[#3f7489] bg-linear-to-b from-white to-[#cddde3]">
                    <svg viewBox="0 0 14 14" className="size-[14px]"><path d="M8 0.500 L13.500 6 L12 6.500 L10.500 6.500 L8.500 9 L8.500 11 L7.500 11.500 L5 9.500 L0.500 13.500 L4.500 8.500 L2.500 6.500 L3.300 5.500 L5.500 5.500 L8 3.500 L7.500 1.500 Z" fill="#44707f" /></svg>
                  </button>
                </div>
              </div>
              <SearchPanel />
              <div className="flex h-[15px] shrink-0 items-start justify-between px-1">
                <button type="button" aria-label="검색조건 접기">
                  <svg viewBox="0 0 39 13" className="block h-[13px] w-[39px]"><defs><linearGradient id="pl" x2="0" y2="1"><stop stopColor="#fff" /><stop offset="1" stopColor="#b9d6e0" /></linearGradient></defs><path d="M0.500 0 C3 8 6 12.500 14 12.500 H25 C33 12.500 36 8 38.500 0 Z" fill="url(#pl)" stroke="#8fb8c6" /><path d="M15.500 8 L19.500 4 L23.500 8" fill="none" stroke="#2f6f8f" strokeWidth="1.800" /></svg>
                </button>
                <button type="button" aria-label="영역 접기">
                  <svg viewBox="0 0 39 13" className="block h-[13px] w-[39px]"><defs><linearGradient id="pr" x2="0" y2="1"><stop stopColor="#86b3c3" /><stop offset="1" stopColor="#246780" /></linearGradient></defs><path d="M0.500 0 C3 8 6 12.500 14 12.500 H25 C33 12.500 36 8 38.500 0 Z" fill="url(#pr)" /><path d="M15.500 8 L19.500 4 L23.500 8" fill="none" stroke="#fff" strokeWidth="1.800" /></svg>
                </button>
              </div>
              <div className="flex min-h-0 flex-1">
                <TemplateGrid />
                <div className="flex w-[7px] shrink-0 flex-col items-center justify-center bg-[#edf2fa] pt-[24px]">
                  <Handle />
                  <Handle flip />
                </div>
                <RightPanels />
              </div>
            </main>
          </div>
        </div>
      </div>
      <div className="flex w-[15px] shrink-0 flex-col items-center justify-between bg-[#2b2b2b] py-1" aria-hidden="true">
        <svg viewBox="0 0 10 8" className="mt-px h-[8px] w-[10px]"><path d="M4 0.500 H6 L9.700 6.500 Q10 7.500 9 7.500 H1 Q0 7.500 0.300 6.500 Z" fill="#9f9f9f" /></svg>
        <svg viewBox="0 0 10 8" className="h-[8px] w-[10px] rotate-180"><path d="M4 0.500 H6 L9.700 6.500 Q10 7.500 9 7.500 H1 Q0 7.500 0.300 6.500 Z" fill="#9f9f9f" /></svg>
      </div>
    </div>
  );
}
